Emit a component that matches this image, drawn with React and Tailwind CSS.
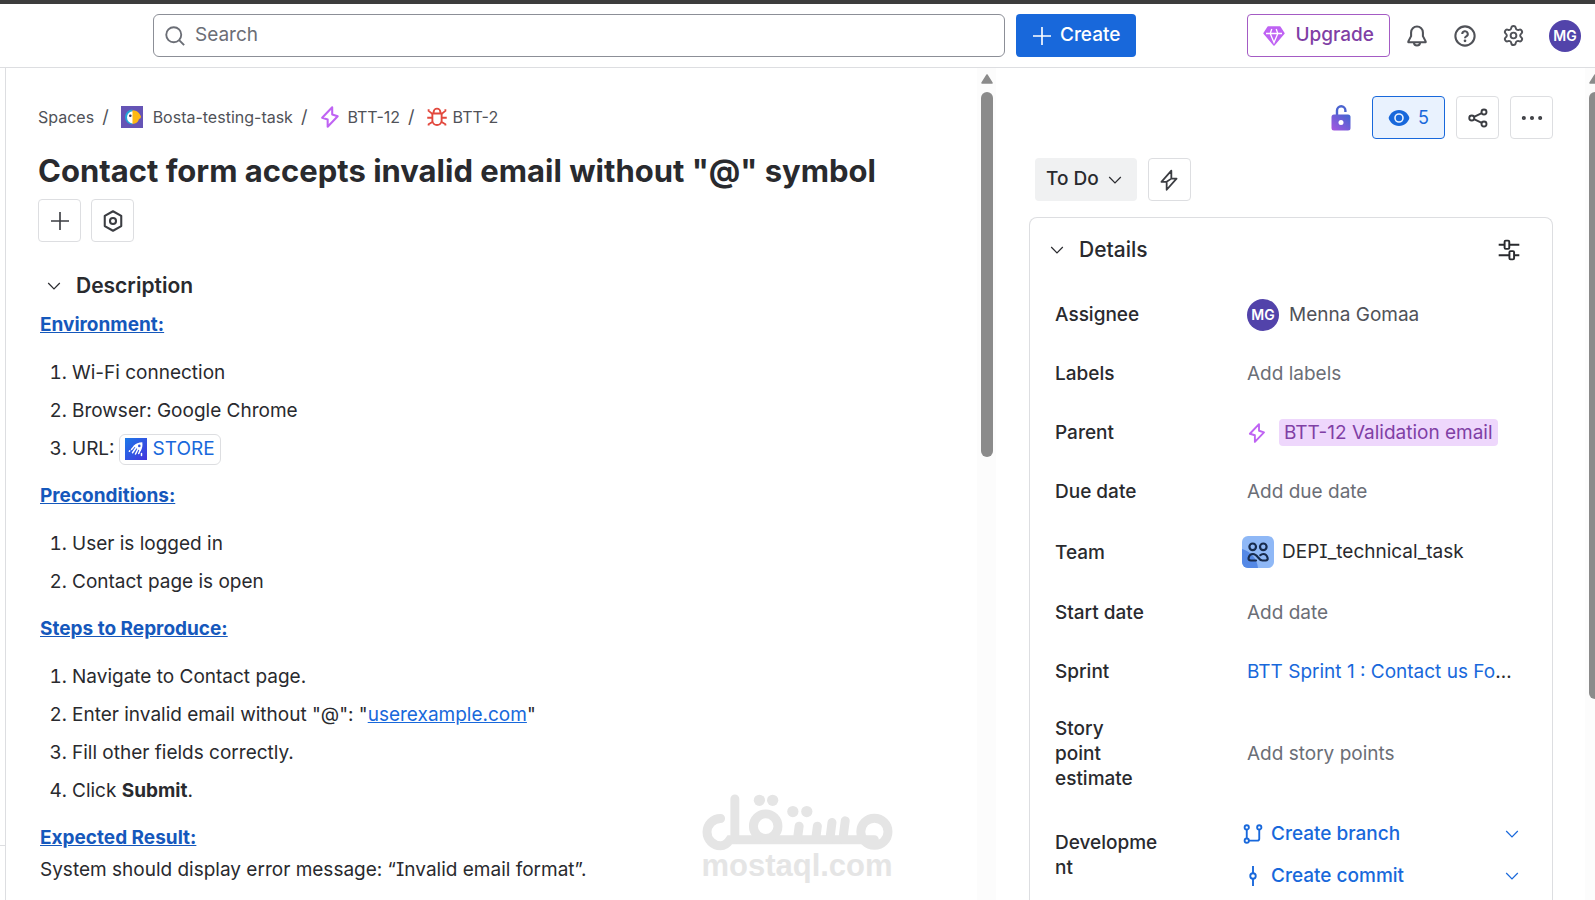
import { MoreHorizontal, Settings } from "lucide-react";

function Icon({ children, className = "size-5", stroke = 1.5 }) {
  return (
    <svg
      viewBox="0 0 16 16"
      className={`${className} shrink-0`}
      fill="none"
      stroke="currentColor"
      strokeWidth={stroke}
      strokeLinejoin="round"
      aria-hidden="true"
    >
      {children}
    </svg>
  );
}

const PlusIcon = ({ className }) => (
  <Icon className={className} stroke={1.3}>
    <path d="M8 .8v14.4M.8 8h14.4" />
  </Icon>
);

const ChevronIcon = ({ className = "size-4" }) => (
  <Icon className={className} stroke={1.2}>
    <path d="M2.2 5 8 10.8 13.8 5" strokeLinejoin="miter" />
  </Icon>
);

const EpicIcon = ({ className = "size-5" }) => (
  <Icon className={`${className} text-[#bf63f3]`}>
    <path d="M9.6.9 2.3 8.6l4 1.2v5.3l7.3-7.6-4-1.3Z" />
  </Icon>
);

const BugIcon = () => (
  <Icon className="size-5 text-[#e2483d]">
    <path d="M4.3 5.2h7.4V11A3.7 3.7 0 0 1 8 14.4 3.7 3.7 0 0 1 4.3 11ZM5.3 5V4a2.7 2.7 0 0 1 5.4 0v1" />
    <path d="M.2 8.6h4M11.8 8.6h4M1.3 1.8v1.3l3.2 2.6M14.7 1.8v1.3l-3.2 2.6M1.3 14.8v-1l3.3-2M14.7 14.8v-1l-3.3-2" />
  </Icon>
);

function ProjectAvatar() {
  return (
    <svg viewBox="0 0 22 22" className="size-[22px] shrink-0" aria-hidden="true">
      <path fill="#6554b5" d="M0 0h22v22H0z" />
      <path fill="#22a6d8" d="M11.5 3.5a7.5 7.5 0 0 0 0 15Z" />
      <path fill="#fff" d="M12 5.2a6 6.2 0 0 0 0 12.4Z" />
      <path fill="#fdb913" d="M11.5 4.2c4.5 0 7 2.8 8.5 6.3-.2 1.5-.8 2.5-2 2.3-.5 3-2.9 5.2-6.5 5.2Z" />
      <circle cx="9.3" cy="9.8" r="1.3" fill="#2b2f5c" />
    </svg>
  );
}

function StoreIcon() {
  return (
    <svg viewBox="0 0 22 22" className="size-[22px] shrink-0" aria-hidden="true">
      <defs>
        <linearGradient id="store" x1="0" y1="0" x2="1" y2="1">
          <stop stopColor="#1d7ae8" />
          <stop offset="1" stopColor="#4433dd" />
        </linearGradient>
      </defs>
      <path fill="url(#store)" d="M0 0h22v22H0z" />
      <path
        fill="#fff"
        fillRule="evenodd"
        d="M17.3 4.2c.5 3.3 0 6.3-1.800 9l-7-5.300c2.300-2.400 5.200-3.700 8.800-3.700ZM14.300 6.600a1.300 1.300 0 1 0 0 2.600 1.300 1.300 0 0 0 0-2.600Z"
      />
      <path
        stroke="#fff"
        strokeWidth="1.5"
        strokeLinecap="round"
        d="m9.500 8-3 3.400M11 9.700l-3.500 5M13 11l-2.500 5M15 12.500l-1.300 3M4.800 12.800l-.4.5M16.500 15.500v2"
      />
    </svg>
  );
}

function TeamIcon() {
  return (
    <svg viewBox="0 0 32 32" className="size-8 shrink-0" aria-hidden="true">
      <rect width="32" height="32" rx="6" fill="#8fb8f6" />
      <path d="M0 13c8 2 15 9 16 19H6a6 6 0 0 1-6-6Z" fill="#5589e6" />
      <g fill="none" stroke="#172b4d" strokeWidth="2.2" strokeLinecap="round">
        <circle cx="10.7" cy="10.8" r="3.3" />
        <circle cx="21.3" cy="10.8" r="3.3" />
        <path d="M14 24.500H9c-2 0-2.700-1-2.400-2.600.5-2.400 2-3.900 4.400-3.900 2.500 0 4 2 5.200 3.500 1.300 1.800 2.500 3 4.300 3h3c2 0 2.400-1.200 2.100-2.600-.6-2.400-2-3.900-4.300-3.900-1.300 0-2.200.4-3 1.200" />
      </g>
    </svg>
  );
}

function GemIcon() {
  return (
    <svg viewBox="0 0 22 20" className="h-5 w-[22px]" aria-hidden="true">
      <path
        d="M5.2 1h11.6L21 7.3 11 19 1 7.3Z"
        fill="#bf63f3"
        stroke="#bf63f3"
        strokeWidth="1.5"
        strokeLinejoin="round"
      />
      <path
        d="M3 7.5h16M7.2 7.5 11 16.5l3.8-9M7.2 7.5 8.8 3M14.8 7.5 13.2 3"
        fill="none"
        stroke="#fff"
        strokeWidth="1.3"
      />
    </svg>
  );
}

function LockIcon() {
  return (
    <svg viewBox="0 0 20 26" className="h-[26px] w-5" aria-hidden="true">
      <defs>
        <linearGradient id="lock" x1="1" y1="0" x2="0" y2="1">
          <stop stopColor="#3f66d0" />
          <stop offset="1" stopColor="#a855e0" />
        </linearGradient>
      </defs>
      <path d="M6 11V5.5a4.2 4.2 0 0 1 8.4 0V7" fill="none" stroke="#4a63cf" strokeWidth="2.4" />
      <rect x=".5" y="9.5" width="19" height="16" rx="2.5" fill="url(#lock)" />
      <circle cx="10" cy="17.5" r="2.5" fill="#fff" />
    </svg>
  );
}

function Avatar() {
  return (
    <span className="flex size-8 shrink-0 items-center justify-center rounded-full bg-[#5243aa] text-sm font-semibold text-white">
      MG
    </span>
  );
}

function IconButton({ label, children }) {
  return (
    <button
      aria-label={label}
      className="flex size-[43px] items-center justify-center rounded border border-[#dddee1] text-[#3b3d42]"
    >
      {children}
    </button>
  );
}

function Scrollbar({ thumb }) {
  return (
    <div className="flex w-[19px] shrink-0 flex-col items-center bg-[#fcfcfc] pt-1.5" aria-hidden="true">
      <svg viewBox="0 0 12 10" className="mb-2 h-2.5 w-3">
        <path d="M6 1 11 9H1Z" fill="#8b8b8b" stroke="#8b8b8b" strokeWidth="1.5" strokeLinejoin="round" />
      </svg>
      <div className={`w-3 rounded-full bg-[#8b8b8b] ${thumb}`} />
    </div>
  );
}

function Header() {
  return (
    <header className="flex shrink-0 items-center border-t-4 border-b border-t-[#3d3d3d] border-b-[#dddee1] py-2.5 pr-3.5 pl-[153px] text-[19px]">
      <label className="flex h-[43px] flex-1 items-center gap-2.5 rounded-md border border-[#8c8f97] px-[11px] text-[#6b6e76]">
        <Icon className="size-5">
          <circle cx="7" cy="7" r="6" />
          <path d="m11.3 11.3 4 4" />
        </Icon>
        <input
          aria-label="Search"
          placeholder="Search"
          className="w-full outline-none placeholder:text-[#6b6e76]"
        />
      </label>
      <button className="ml-[11px] flex h-[43px] items-center gap-2 rounded bg-[#1868db] px-4 font-medium text-white">
        <PlusIcon className="size-5" />
        Create
      </button>
      <button className="ml-[111px] flex h-[43px] items-center gap-2.5 rounded border border-[#a45bc4] px-[15px] font-medium text-[#803fa5]">
        <GemIcon />
        Upgrade
      </button>
      <nav className="ml-4 flex items-center gap-[26px] text-[#505258]">
        <button aria-label="Notifications">
          <Icon className="size-[22px]">
            <path d="M3.7 5.4a4.3 4.3 0 0 1 8.6 0v2.7l2 3.8v.7H1.7v-.7l2-3.8Z" />
            <path d="M5.8 12.7a2.2 2.2 0 0 0 4.4 0" />
          </Icon>
        </button>
        <button aria-label="Help">
          <Icon className="size-[22px]">
            <circle cx="8" cy="8" r="7" />
            <path d="M6 6.5a2 2 0 1 1 2.9 1.8c-.6.3-.9.6-.9 1.3" />
            <circle cx="8" cy="11.5" r=".5" fill="currentColor" strokeWidth="1" />
          </Icon>
        </button>
        <button aria-label="Settings">
          <Settings className="size-[23px]" strokeWidth={2} />
        </button>
        <button aria-label="Account" className="-ml-0.5">
          <Avatar />
        </button>
      </nav>
    </header>
  );
}

function Breadcrumbs() {
  return (
    <nav aria-label="Breadcrumb" className="flex items-center text-base leading-6 text-[#505258]">
      <a href="#spaces">Spaces</a>
      <span className="mx-2 text-lg/6">/</span>
      <a href="#project" className="ml-1 flex items-center gap-2.5">
        <ProjectAvatar />
        Bosta-testing-task
      </a>
      <span className="mx-2 text-lg/6">/</span>
      <a href="#btt-12" className="ml-1 flex items-center gap-1.5">
        <EpicIcon className="size-[22px]" />
        BTT-12
      </a>
      <span className="mx-2 text-lg/6">/</span>
      <a href="#btt-2" className="ml-1 flex items-center gap-1.5">
        <BugIcon />
        BTT-2
      </a>
    </nav>
  );
}

function Section({ title, children }) {
  return (
    <section className="mb-[19px]">
      <h3 className="font-bold text-[#1558bc] underline">{title}</h3>
      {children}
    </section>
  );
}

function Steps({ children }) {
  return <ol className="mt-5 list-decimal space-y-2.5 pl-8">{children}</ol>;
}

function Issue() {
  return (
    <main className="min-w-0 flex-1 overflow-hidden pt-[37px] pl-8">
      <Breadcrumbs />
      <h1 className="mt-5 text-[31px] leading-[44px] font-bold text-[#292a2e]">
        Contact form accepts invalid email without "@" symbol
      </h1>
      <div className="mt-1.5 flex gap-2.5">
        <IconButton label="Add">
          <PlusIcon className="size-5" />
        </IconButton>
        <IconButton label="Apps">
          <Icon className="size-[22px]">
            <path d="M8 .9 14 4.3v7.4l-6 3.4-6-3.4V4.3Z" />
            <circle cx="8" cy="8" r="2.2" />
          </Icon>
        </IconButton>
      </div>

      <h2 className="mt-7 flex items-center gap-3.5 pl-2 text-[21px] leading-8 font-semibold">
        <ChevronIcon />
        Description
      </h2>

      <div className="mt-[9px] pl-0.5 text-[19px] leading-7">
        <Section title="Environment:">
          <Steps>
            <li>Wi-Fi connection</li>
            <li>Browser: Google Chrome</li>
            <li>
              <span className="flex h-7 items-center gap-1">
                URL:
                <a
                  href="#store"
                  className="flex h-[31px] items-center gap-1.5 rounded-md border border-[#dddee1] px-[5px] text-[#1868db]"
                >
                  <StoreIcon />
                  STORE
                </a>
              </span>
            </li>
          </Steps>
        </Section>
        <Section title="Preconditions:">
          <Steps>
            <li>User is logged in</li>
            <li>Contact page is open</li>
          </Steps>
        </Section>
        <Section title="Steps to Reproduce:">
          <Steps>
            <li>Navigate to Contact page.</li>
            <li>
              Enter invalid email without "@": "
              <a href="#userexample" className="text-[#1868db] underline">
                userexample.com
              </a>
              "
            </li>
            <li>Fill other fields correctly.</li>
            <li>
              Click <strong>Submit</strong>.
            </li>
          </Steps>
        </Section>
        <Section title="Expected Result:">
          <p className="mt-1">System should display error message: “Invalid email format”.</p>
        </Section>
      </div>
    </main>
  );
}

function Row({ label, height = "min-h-[59px]", children }) {
  return (
    <div className={`flex items-center ${height}`}>
      <dt className="mr-[88px] w-[104px] shrink-0 leading-[25px] font-medium break-words whitespace-pre-line text-[#292a2e]">
        {label}
      </dt>
      <dd className="flex min-w-0 flex-1 items-center leading-7 text-[#6b6e76]">{children}</dd>
    </div>
  );
}

function DevAction({ icon, children }) {
  return (
    <div className="flex items-center justify-between">
      <button className="flex items-center gap-2 font-medium">
        {icon}
        {children}
      </button>
      <button aria-label="More options">
        <ChevronIcon />
      </button>
    </div>
  );
}

function Details() {
  return (
    <section className="rounded-t-lg border border-b-0 border-[#dddee1] pt-4 pr-8 pl-[25px]">
      <div className="mb-[19px] flex items-center justify-between">
        <h2 className="-ml-1.5 flex items-center gap-3.5 text-[21px] leading-8 font-medium">
          <ChevronIcon />
          Details
        </h2>
        <button aria-label="Configure fields">
          <Icon className="size-[22px]" stroke={1.4}>
            <path d="M.5 4.2h4.300M8.200 4.200h7.300M.5 11.800h7.800M11.700 11.800h3.800" />
            <rect x="4.8" y="1.2" width="3.4" height="6" rx=".8" />
            <rect x="8.3" y="8.8" width="3.4" height="6" rx=".8" />
          </Icon>
        </button>
      </div>
      <dl className="text-[19px]">
        <Row label="Assignee">
          <Avatar />
          <span className="ml-2.5 text-[#505258]">Menna Gomaa</span>
        </Row>
        <Row label="Labels">Add labels</Row>
        <Row label="Parent">
          <EpicIcon />
          <a href="#parent" className="ml-3 rounded bg-[#eed7fc] px-[5px] leading-[27px] whitespace-nowrap text-[#803fa5]">
            BTT-12 Validation email
          </a>
        </Row>
        <Row label="Due date">Add due date</Row>
        <Row label="Team" height="min-h-[62px]">
          <span className="-ml-[5px] flex items-center gap-2 text-[#292a2e]">
            <TeamIcon />
            DEPI_technical_task
          </span>
        </Row>
        <Row label="Start date">Add date</Row>
        <Row label="Sprint">
          <span className="mr-2 truncate text-[#292a2e]">
            <a href="#sprint" className="text-[#1868db]">
              BTT Sprint 1 : Contact us Form
            </a>
          </span>
        </Row>
        <Row label={"Story\npoint\nestimate"} height="min-h-[105px]">
          Add story points
        </Row>
        <Row label="Development" height="min-h-[98px]">
          <div className="-ml-1 flex flex-1 flex-col gap-3.5 text-[#1868db]">
            <DevAction
              icon={
                <Icon className="size-5">
                  <circle cx="3" cy="2.7" r="1.7" />
                  <circle cx="13" cy="2.7" r="1.7" />
                  <circle cx="3" cy="13.3" r="1.7" />
                  <path d="M3 4.4v7.2M4.7 13.3h6.8a1.5 1.5 0 0 0 1.5-1.5V4.4" />
                </Icon>
              }
            >
              Create branch
            </DevAction>
            <DevAction
              icon={
                <Icon className="size-5">
                  <circle cx="8" cy="8" r="2.2" />
                  <path d="M8 0v5.8M8 10.2V16" />
                </Icon>
              }
            >
              Create commit
            </DevAction>
          </div>
        </Row>
      </dl>
    </section>
  );
}

function Sidebar() {
  return (
    <aside className="w-[589px] shrink-0 overflow-hidden pt-7 pr-8 pl-[33px]">
      <div className="flex items-center justify-end gap-[11px]">
        <button aria-label="Restrictions" className="mr-2.5">
          <LockIcon />
        </button>
        <button
          aria-label="Watchers"
          className="flex h-[43px] items-center gap-2 rounded border border-[#1868db] bg-[#e9f2fe] px-[15px] text-lg text-[#1868db]"
        >
          <svg viewBox="0 0 22 18" className="h-[18px] w-[22px]" aria-hidden="true">
            <path
              d="M11 1C5.5 1 1.5 5.2.6 9c.9 3.8 4.9 8 10.4 8s9.5-4.2 10.4-8C20.5 5.2 16.5 1 11 1Z"
              fill="currentColor"
            />
            <circle cx="11" cy="9" r="4" fill="none" stroke="#e9f2fe" strokeWidth="1.6" />
          </svg>
          5
        </button>
        <IconButton label="Share">
          <Icon className="size-5">
            <circle cx="3" cy="8" r="2" />
            <circle cx="12.8" cy="3.2" r="2" />
            <circle cx="12.8" cy="12.8" r="2" />
            <path d="m4.8 7.1 6.2-3M4.8 8.9l6.2 3" />
          </Icon>
        </IconButton>
        <IconButton label="Actions">
          <MoreHorizontal className="size-7" strokeWidth={1.5} />
        </IconButton>
      </div>
      <div className="mt-[19px] flex gap-[11px] pl-1.5">
        <button className="flex h-[43px] items-center gap-2 rounded bg-[#f0f1f2] pr-3.5 pl-[11px] text-[19px] font-medium text-[#292a2e]">
          To Do
          <ChevronIcon />
        </button>
        <IconButton label="Automation">
          <Icon className="size-[22px]" stroke={1.3}>
            <path d="M9.7 1.2 2.5 9.3h3.8v5.8l7.2-8.1H9.7ZM9.7 7 6.3 9.3" />
          </Icon>
        </IconButton>
      </div>
      <div className="mt-4">
        <Details />
      </div>
    </aside>
  );
}

function Watermark() {
  return (
    <div className="pointer-events-none absolute bottom-5 left-[694px] flex w-[206px] flex-col items-center text-[#e5e5e5]">
      <svg viewBox="60 38 584 178" className="h-[59px] w-[195px]" role="img" aria-label="مستقل">
        <g fill="none" stroke="currentColor" strokeWidth="27" strokeLinecap="round">
          <path d="M120 115a41 41 0 1 0 0 82q16 0 28-18H584" />
          <path d="M163 56v122M357 138l-5 38M412 138l-5 38M456 127l-6 48M496 122l-7 54" />
          <circle cx="256" cy="138" r="37" />
          <circle cx="584" cy="155" r="41" />
        </g>
        <g fill="currentColor">
          <circle cx="237" cy="60" r="17" />
          <circle cx="277" cy="60" r="17" />
          <circle cx="338" cy="94" r="17" />
          <circle cx="380" cy="94" r="17" />
        </g>
      </svg>
      <span className="font-['Liberation_Sans',sans-serif] text-[31px] leading-7 font-bold">mostaql.com</span>
    </div>
  );
}

export default function App() {
  return (
    <div className="relative flex h-screen flex-col overflow-hidden bg-white font-['Inter',sans-serif] text-[#292a2e] [font-feature-settings:'cv08']">
      <Header />
      <div className="flex min-h-0 flex-1">
        <div className="flex w-[5px] shrink-0 flex-col justify-end">
          <div className="h-[55px] border-t border-[#dddee1]" />
        </div>
        <div className="flex min-w-0 flex-1 border-l border-[#dddee1]">
          <Issue />
          <Scrollbar thumb="h-[365px]" />
          <Sidebar />
          <div className="flex w-2.5 shrink-0 overflow-hidden">
            <Scrollbar thumb="h-[607px]" />
          </div>
        </div>
      </div>
      <Watermark />
    </div>
  );
}
